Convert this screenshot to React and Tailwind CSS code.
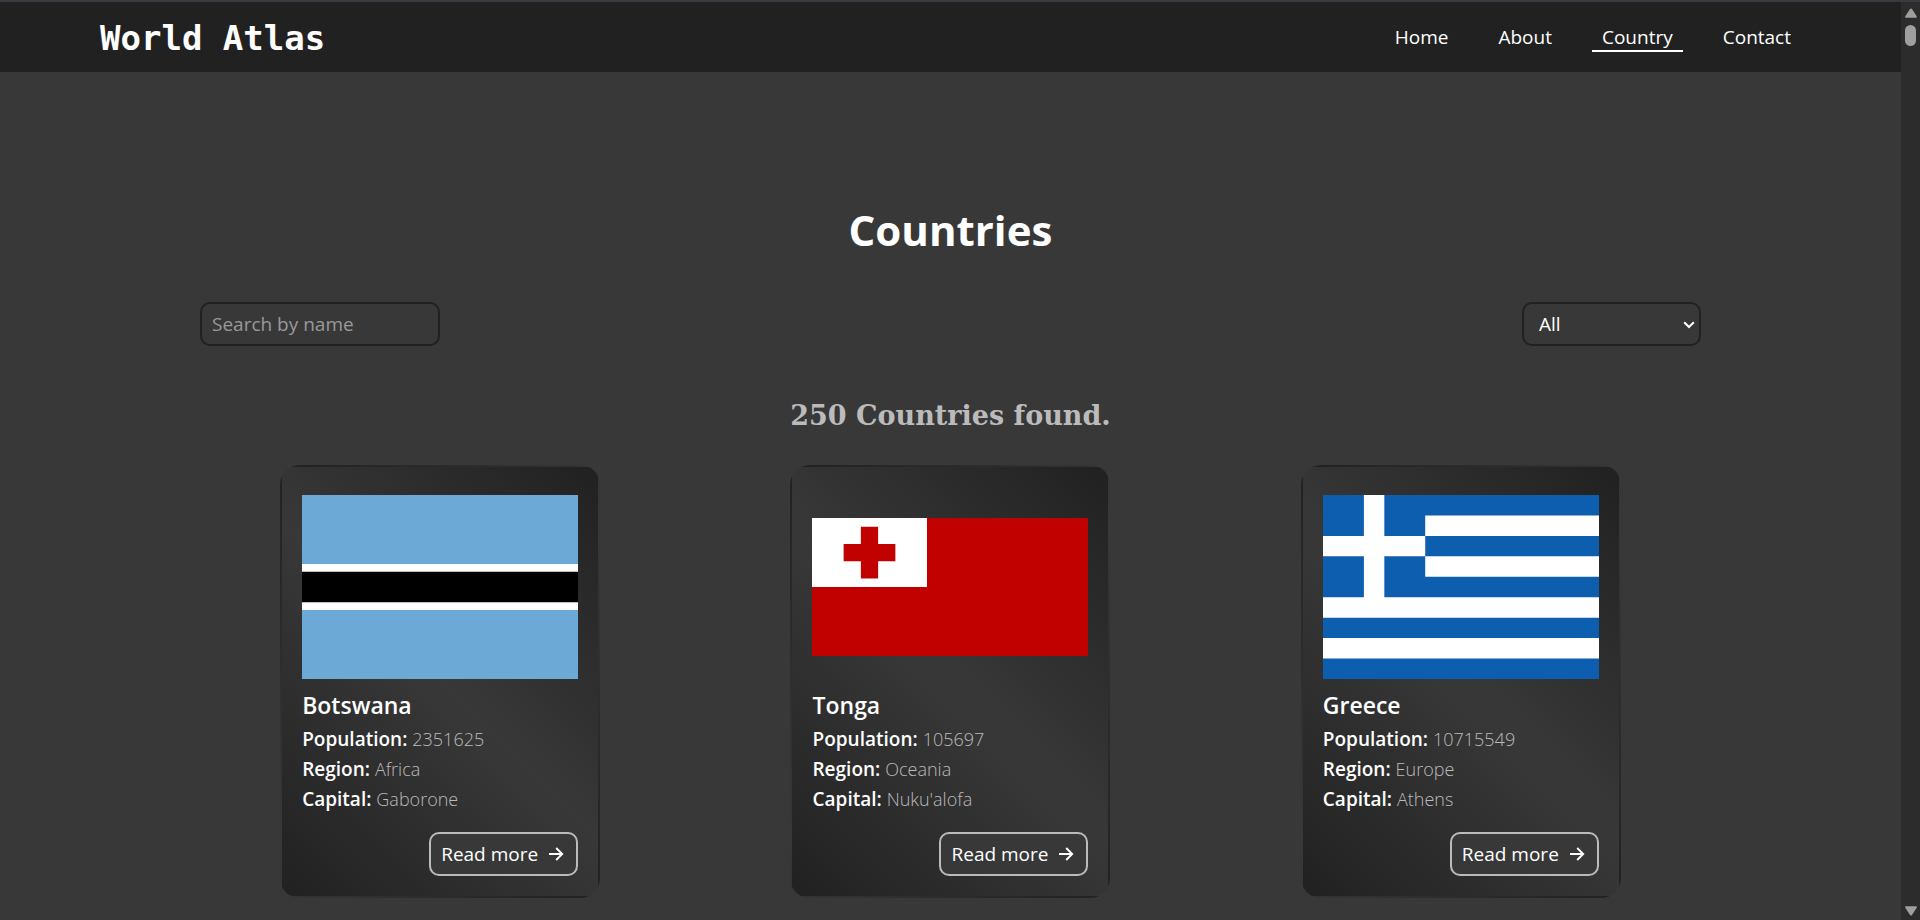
import React from "react";

const links = [
  { label: "Home" },
  { label: "About" },
  { label: "Country", active: true },
  { label: "Contact" },
];

function BotswanaFlag() {
  return (
    <svg viewBox="0 0 72 48" className="h-full w-full" role="img" aria-label="Flag of Botswana">
      <path fill="#6da9d6" d="M0 0h72v48H0z" />
      <path fill="#fff" d="M0 18h72v12H0z" />
      <path fill="#000" d="M0 20h72v8H0z" />
    </svg>
  );
}

function TongaFlag() {
  return (
    <svg viewBox="0 0 960 480" className="h-full w-full" role="img" aria-label="Flag of Tonga">
      <path fill="#c10000" d="M0 0h960v480H0z" />
      <path fill="#fff" d="M0 0h400v240H0z" />
      <path fill="#c10000" d="M170 30h60v60h60v60h-60v60h-60v-60h-60V90h60z" />
    </svg>
  );
}

function GreeceFlag() {
  return (
    <svg viewBox="0 0 27 18" className="h-full w-full" role="img" aria-label="Flag of Greece">
      <path fill="#0d5eaf" d="M0 0h27v18H0z" />
      <path fill="#fff" d="M10 2h17v2H10zM10 6h17v2H10zM0 10h27v2H0zM0 14h27v2H0zM4 0h2v10H4zM0 4h10v2H0z" />
    </svg>
  );
}

function ArrowIcon() {
  return (
    <svg viewBox="0 0 20 20" className="size-5" fill="none" stroke="currentColor" strokeWidth="1.9" aria-hidden="true">
      <path d="M3 10h12.8M10.2 4l6 6l-6 6" />
    </svg>
  );
}

const countries = [
  { name: "Botswana", population: "2351625", region: "Africa", capital: "Gaborone", Flag: BotswanaFlag },
  { name: "Tonga", population: "105697", region: "Oceania", capital: "Nuku'alofa", Flag: TongaFlag },
  { name: "Greece", population: "10715549", region: "Europe", capital: "Athens", Flag: GreeceFlag },
];

function Fact({ label, value }) {
  return (
    <p className="text-[19px] leading-[30px]">
      <span className="font-semibold">{label}:</span>{" "}
      <span className="text-[18px] font-light text-[#bbbbbb]">{value}</span>
    </p>
  );
}

function CountryCard({ name, population, region, capital, Flag }) {
  return (
    <article className="flex w-[320px] flex-col rounded-[20px] border-2 border-transparent bg-[linear-gradient(45deg,#212121,#383838,#212121)] p-5">
      <div className="h-[200px]">
        <Flag />
      </div>
      <h3 className="text-[23px] leading-[37px] font-semibold">{name}</h3>
      <Fact label="Population" value={population} />
      <Fact label="Region" value={region} />
      <Fact label="Capital" value={capital} />
      <button
        type="button"
        className="mt-[18px] flex h-11 w-[149px] items-center justify-between self-end rounded-[10px] border-2 border-[#bbbbbb] bg-[#383838] px-2.5 text-[19px]"
      >
        Read more
        <ArrowIcon />
      </button>
    </article>
  );
}

function RegionSelect() {
  return (
    <div className="relative w-[179px]">
      <select
        aria-label="Region"
        className="h-11 w-full appearance-none rounded-[10px] border-2 border-[#212121] bg-[#383838] pl-[15px] text-[19px]"
      >
        <option>All</option>
        <option>Africa</option>
        <option>Americas</option>
        <option>Asia</option>
        <option>Europe</option>
        <option>Oceania</option>
      </select>
      <svg
        viewBox="0 0 12 8"
        className="pointer-events-none absolute top-[19px] right-[6px] h-2 w-3"
        fill="none"
        stroke="currentColor"
        strokeWidth="2"
        aria-hidden="true"
      >
        <path d="M1.2 1.2l4.8 4.8l4.8-4.8" />
      </svg>
    </div>
  );
}

function Scrollbar() {
  return (
    <div aria-hidden="true" className="flex w-[19px] shrink-0 flex-col items-center bg-[#2c2c2c] pt-1.5 pb-1">
      <svg viewBox="0 0 12 10" className="h-[10px] w-3" fill="#9f9f9f">
        <path d="M6 0.5Q6.6 0.5 7 1.1L11.7 8.2Q12.3 9.7 11 9.7H1Q-0.3 9.7 0.3 8.2L5 1.1Q5.4 0.5 6 0.5Z" />
      </svg>
      <div className="mt-[7px] h-[21px] w-[11px] rounded-full bg-[#9f9f9f]" />
      <svg viewBox="0 0 12 10" className="mt-auto h-[10px] w-3 rotate-180" fill="#9f9f9f">
        <path d="M6 0.5Q6.6 0.5 7 1.1L11.7 8.2Q12.3 9.7 11 9.7H1Q-0.3 9.7 0.3 8.2L5 1.1Q5.4 0.5 6 0.5Z" />
      </svg>
    </div>
  );
}

export default function App() {
  return (
    <div className="flex min-h-screen flex-col border-t-2 border-[#3a3a40] bg-[#383838] font-['Segoe_UI','Open_Sans',sans-serif] text-white">
      <div className="flex grow">
        <div className="min-w-0 grow">
          <header className="flex h-[70px] items-center justify-between bg-[#212121] px-[100px] pt-0.5">
            <a href="#home" className="font-['DejaVu_Sans_Mono',monospace] text-[34px] leading-10 font-bold">
              World Atlas
            </a>
            <nav className="flex gap-[30px]">
              {links.map(({ label, active }) => (
                <a
                  key={label}
                  href={`#${label.toLowerCase()}`}
                  aria-current={active ? "page" : undefined}
                  className={`border-b-2 px-2.5 text-[19px] leading-[26px] ${active ? "border-white" : "border-transparent"}`}
                >
                  {label}
                </a>
              ))}
            </nav>
          </header>

          <main className="pt-[128px] pb-4">
            <h1 className="text-center text-[42px] leading-[60px] font-bold">Countries</h1>
            <div className="mt-[42px] flex items-center justify-between px-[200px]">
              <input
                type="text"
                aria-label="Search by name"
                placeholder="Search by name"
                className="h-11 w-[240px] rounded-[10px] border-2 border-[#212121] bg-transparent px-2.5 text-[19px] placeholder:text-[#999999]"
              />
              <RegionSelect />
            </div>
            <h2 className="mt-[49px] text-center font-[Georgia,'DejaVu_Serif',serif] text-[27px] leading-[42px] font-bold text-[#bbbbbb]">
              250 Countries found.
            </h2>
            <section className="mt-7 grid grid-cols-3 justify-items-center px-[185px]">
              {countries.map((country) => (
                <CountryCard key={country.name} {...country} />
              ))}
            </section>
          </main>
        </div>
        <Scrollbar />
      </div>
    </div>
  );
}
